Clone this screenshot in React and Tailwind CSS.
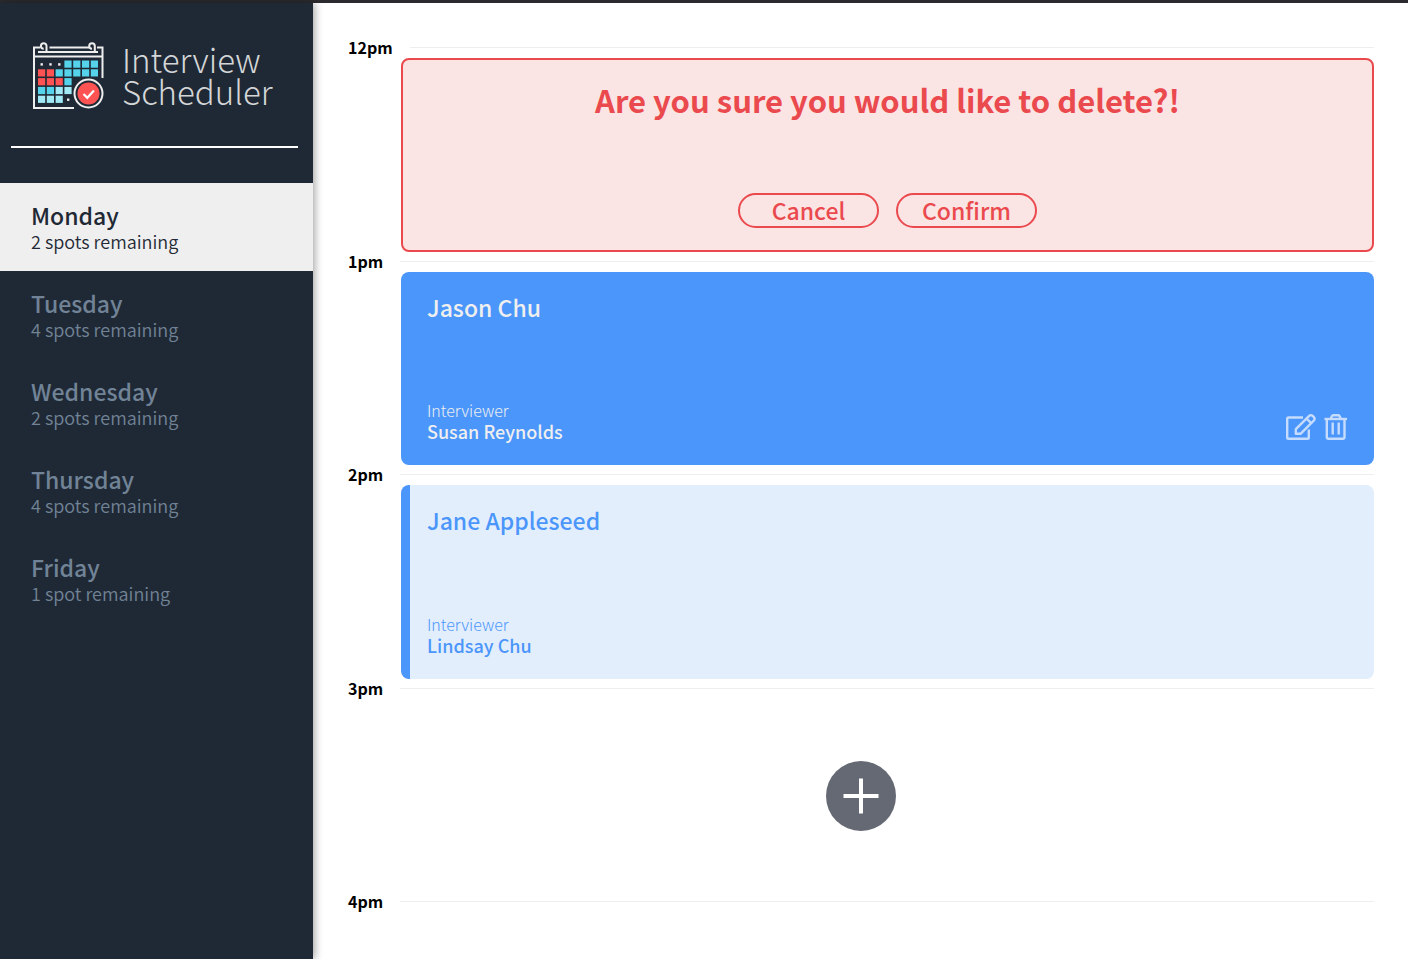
const days = [
  { name: "Monday", spots: "2 spots remaining", selected: true },
  { name: "Tuesday", spots: "4 spots remaining" },
  { name: "Wednesday", spots: "2 spots remaining" },
  { name: "Thursday", spots: "4 spots remaining" },
  { name: "Friday", spots: "1 spot remaining" },
];

const cyan = "#54d3eb";
const pale = "#a1e9f5";
const red = "#ff5252";

const cells = [
  [null, null, null, cyan, cyan, cyan, cyan],
  [red, red, cyan, cyan, cyan, cyan, cyan],
  [red, red, red, cyan],
  [cyan, cyan, pale, pale],
  [pale, pale, pale],
];

function CalendarIcon() {
  return (
    <svg width="74" height="70" viewBox="0 0 74 70" fill="none" aria-hidden="true" className="shrink-0">
      <g stroke="#eeeeee" strokeWidth="2">
        <path d="M8 6.500H2V67H42" />
        <path d="M17.500 6.500H57" />
        <path d="M65 6.500H70.500V37" />
        <path d="M2 15.500H70" />
        <path d="M6 11H66" />
        <path d="M14.500 11.500V5a2.800 2.800 0 1 0-2.800 2.800" />
        <path d="M62.800 11.500V5a2.800 2.800 0 1 0-2.800 2.800" />
      </g>
      {cells.map((row, r) =>
        row.map((color, c) =>
          color ? (
            <rect key={`${r}-${c}`} x={6 + c * 8.8} y={19.500 + r * 8.8} width="7.2" height="7.2" fill={color} />
          ) : (
            <rect key={`${r}-${c}`} x={8.500 + c * 8.8} y="22.200" width="2.400" height="2.400" fill="#eeeeee" />
          )
        )
      )}
      <rect x="35" y="57.500" width="2.400" height="2.400" fill="#eeeeee" />
      <circle cx="56.500" cy="52.500" r="14" fill="#1f2935" stroke="#eeeeee" strokeWidth="2" />
      <circle cx="56.500" cy="52.500" r="11" fill={red} />
      <path d="M51.500 53l3.800 3.800 6.600-7.200" stroke="#ffffff" strokeWidth="2.200" />
    </svg>
  );
}

function EditIcon() {
  return (
    <svg width="30" height="28" viewBox="0 0 30 28" fill="none" stroke="#c6dcfe" strokeWidth="2.400" strokeLinejoin="round" aria-hidden="true">
      <path d="M17 4.500H2.500a1.300 1.300 0 0 0-1.300 1.300V24.500a1.300 1.300 0 0 0 1.300 1.300H21.500a1.300 1.300 0 0 0 1.300-1.300V16.500" />
      <path d="M9.800 20.800v-4.600L23.200 2.800a2.400 2.400 0 0 1 3.400 0l1.300 1.300a2.400 2.400 0 0 1 0 3.400L14.500 20.800z" />
      <path d="M20.500 5.500l4.700 4.700" />
    </svg>
  );
}

function TrashIcon() {
  return (
    <svg width="24" height="28" viewBox="0 0 24 28" fill="none" stroke="#c6dcfe" strokeWidth="2.400" strokeLinejoin="round" aria-hidden="true">
      <path d="M0.500 6H23" />
      <path d="M2.800 6V24.300a1.500 1.500 0 0 0 1.500 1.500H19a1.500 1.500 0 0 0 1.500-1.500V6" />
      <path d="M6.500 6l1.500-3a1.500 1.500 0 0 1 1.300-.8h4.900a1.500 1.500 0 0 1 1.300.8L17 6" />
      <path d="M8.700 9.500V21.500M14.700 9.500V21.500" />
    </svg>
  );
}

function Hour({ time }) {
  return (
    <header className="flex h-5 gap-[17px]">
      <h4 className="text-base leading-[18px] font-bold text-black">{time}</h4>
      <hr className="mt-[9px] flex-1 border-t border-[#eeeeee]" />
    </header>
  );
}

function Booking({ student, interviewer, children }) {
  return (
    <>
      <div className="flex flex-1 flex-col justify-between">
        <h2 className="text-[23px] leading-8 font-medium">{student}</h2>
        <div>
          <h4 className="text-base leading-5 font-light">Interviewer</h4>
          <h3 className="text-lg leading-[22px] font-medium">{interviewer}</h3>
        </div>
      </div>
      {children}
    </>
  );
}

export default function App() {
  return (
    <div className="flex min-h-screen flex-col bg-white font-['Noto_Sans_CJK_SC',sans-serif]">
      <div className="h-[3px] bg-[#2b2a2e]" />
      <main className="flex flex-1">
        <aside className="w-[313px] shrink-0 bg-[#1f2935] shadow-[2px_0_8px_rgba(0,0,0,0.35)]">
          <div className="flex items-start gap-4 pt-[38px] pl-8">
            <CalendarIcon />
            <h1 className="pt-0.5 text-[33px] leading-8 font-light text-[#d4d6d8]">
              Interview
              <br />
              Scheduler
            </h1>
          </div>
          <hr className="mt-[35px] mr-[15px] ml-[11px] border-t-2 border-white" />
          <nav className="mt-[35px]">
            <ul>
              {days.map((day) => (
                <li key={day.name}>
                  <button
                    type="button"
                    className={
                      day.selected
                        ? "block h-[88px] w-full bg-[#efefef] px-[31px] text-left text-[#1f2935]"
                        : "block h-[88px] w-full px-[31px] text-left text-[#718396]"
                    }
                  >
                    <span className="block text-[23px] leading-7 font-medium">{day.name}</span>
                    <span className="block text-lg leading-6 font-[350]">{day.spots}</span>
                  </button>
                </li>
              ))}
            </ul>
          </nav>
        </aside>

        <section className="min-w-0 flex-1 pt-[35px] pr-[34px] pl-[35px]">
          <Hour time="12pm" />
          <article className="ml-[53px] flex h-[194px] flex-col items-center justify-between rounded-lg border-2 border-[#ea4a4e] bg-[#fbe4e4] pt-[18px] pb-[22px] text-[#ea4a4e]">
            <h1 className="text-[31px] leading-[44px] font-bold">Are you sure you would like to delete?!</h1>
            <div className="flex gap-[17px]">
              <button type="button" className="flex h-[35px] w-[141px] items-center justify-center rounded-full border-2 border-[#ea4a4e] pb-0.5 text-[23px] leading-7 font-medium">
                Cancel
              </button>
              <button type="button" className="flex h-[35px] w-[141px] items-center justify-center rounded-full border-2 border-[#ea4a4e] pb-0.5 text-[23px] leading-7 font-medium">
                Confirm
              </button>
            </div>
          </article>

          <Hour time="1pm" />
          <article className="ml-[53px] flex h-[193px] items-end rounded-lg bg-[#4b96fb] px-[26px] pt-[19px] pb-[23px] text-[#efefef]">
            <div className="flex h-full flex-1">
              <Booking student="Jason Chu" interviewer="Susan Reynolds" />
            </div>
            <div className="flex gap-2 pb-px">
              <button type="button" aria-label="Edit">
                <EditIcon />
              </button>
              <button type="button" aria-label="Delete">
                <TrashIcon />
              </button>
            </div>
          </article>

          <Hour time="2pm" />
          <article className="ml-[53px] flex h-[194px] rounded-lg border-l-[9px] border-[#4b96fb] bg-[#e3eefd] pt-[19px] pr-[26px] pb-[23px] pl-[17px] text-[#4b96fb]">
            <Booking student="Jane Appleseed" interviewer="Lindsay Chu" />
          </article>

          <Hour time="3pm" />
          <article className="flex h-[193px] items-center justify-center">
            <button type="button" aria-label="Add" className="flex size-[70px] items-center justify-center rounded-full bg-[#646973]">
              <svg width="36" height="36" viewBox="0 0 36 36" aria-hidden="true">
                <path d="M18 0.500V35.500M0.500 18H35.500" stroke="#ffffff" strokeWidth="4" />
              </svg>
            </button>
          </article>

          <Hour time="4pm" />
        </section>
      </main>
    </div>
  );
}
